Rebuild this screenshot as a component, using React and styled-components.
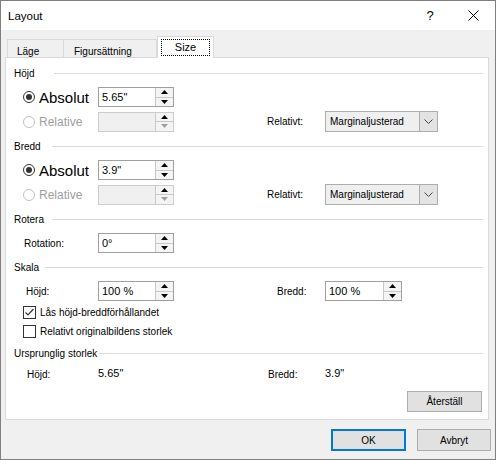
import React from 'react'
import styled, { createGlobalStyle } from 'styled-components'

const GlobalStyle = createGlobalStyle`
  html, body { margin: 0; padding: 0; background: #fff; }
  body { font-family: "Liberation Sans", Arial, sans-serif; color: #000; }
`

const Window = styled.div`
  width: 496px;
  height: 460px;
  box-sizing: border-box;
  border: 1px solid #7f7f7f;
  background: #f0f0f0;
  display: flex;
  flex-direction: column;
`

const TitleBar = styled.div`
  height: 29px;
  background: #fff;
  display: flex;
  align-items: center;
  padding-left: 7px;
  flex-shrink: 0;
`

const Title = styled.div`
  flex: 1;
  font-size: 11.5px;
`

const CaptionButton = styled.div`
  width: ${p => p.$w}px;
  height: 29px;
  display: flex;
  align-items: center;
  justify-content: center;
  font-size: 13px;
`

const TabStrip = styled.div`
  display: flex;
  align-items: flex-end;
  height: 21px;
  margin-top: 7px;
  padding-left: 6px;
  margin-bottom: -1px;
  position: relative;
  z-index: 1;
`

const Tab = styled.div`
  width: ${p => p.$w}px;
  height: ${p => p.$active ? 22 : 19}px;
  box-sizing: border-box;
  border: 1px solid #d9d9d9;
  border-left-width: ${p => p.$first || p.$active ? 1 : 0}px;
  border-bottom: ${p => p.$active ? 'none' : '1px solid #d9d9d9'};
  background: ${p => p.$active ? '#fff' : '#f0f0f0'};
  display: flex;
  align-items: center;
  justify-content: ${p => p.$active ? 'center' : 'flex-start'};
  padding-left: ${p => p.$active ? 0 : p.$pl}px;
  padding-top: ${p => p.$active ? 0 : 5}px;
  font-size: ${p => p.$active ? 11 : 10}px;
`

const FocusRing = styled.span`
  outline: 1px dotted #000;
  padding: 1px 13px 2px;
  margin-top: -1px;
`

const Panel = styled.div`
  margin-left: 4px;
  width: 484px;
  box-sizing: border-box;
  border: 1px solid #d9d9d9;
  background: #fff;
  padding: 8px 0 7px;
  display: flex;
  flex-direction: column;
`

const GroupHeader = styled.div`
  height: 14px;
  display: flex;
  align-items: center;
  padding: 0 5px 0 8px;
  margin-top: ${p => p.$mt || 0}px;
  font-size: 10px;
`

const GroupLabel = styled.div`
  width: ${p => p.$w ? `${p.$w}px` : 'auto'};
  margin-right: ${p => p.$w ? 0 : 2}px;
  white-space: nowrap;
  flex-shrink: 0;
`

const GroupLine = styled.div`
  flex: 1;
  height: 1px;
  background: #dcdcdc;
`

const Row = styled.div`
  display: flex;
  align-items: center;
  height: ${p => p.$h || 20}px;
  margin-top: ${p => p.$mt || 0}px;
`

const Cell = styled.div`
  width: ${p => p.$w}px;
  padding-left: ${p => p.$pl || 0}px;
  box-sizing: border-box;
  display: flex;
  align-items: center;
  flex-shrink: 0;
  font-size: 10px;
`

const RadioCircle = styled.span`
  width: 12px;
  height: 12px;
  box-sizing: border-box;
  border-radius: 50%;
  border: 1px solid ${p => p.$disabled ? '#c2c2c2' : '#333'};
  background: #fff;
  display: flex;
  align-items: center;
  justify-content: center;
  margin-right: 4px;
  flex-shrink: 0;
  &::after {
    content: '';
    display: ${p => p.$checked ? 'block' : 'none'};
    width: 6px;
    height: 6px;
    border-radius: 50%;
    background: #333;
  }
`

const RadioText = styled.span`
  font-size: ${p => p.$big ? 15 : 12}px;
  color: ${p => p.$disabled ? '#a0a0a0' : '#000'};
  white-space: nowrap;
`

const Radio = ({ label, checked, disabled, big }) =>
  <>
    <RadioCircle $checked={checked} $disabled={disabled} />
    <RadioText $big={big} $disabled={disabled}>{label}</RadioText>
  </>

const SpinBox = styled.div`
  width: ${p => p.$w}px;
  height: 20px;
  box-sizing: border-box;
  border: 1px solid ${p => p.$disabled ? '#cccccc' : '#a0a0a0'};
  background: ${p => p.$disabled ? '#f0f0f0' : '#fff'};
  display: flex;
  flex-shrink: 0;
`

const SpinValue = styled.div`
  flex: 1;
  display: flex;
  align-items: center;
  padding-left: 3px;
  font-size: 11px;
`

const SpinButtons = styled.div`
  width: 17px;
  display: flex;
  flex-direction: column;
  border-left: 1px solid #c8c8c8;
  background: #f4f4f4;
`

const SpinButton = styled.div`
  flex: 1;
  display: flex;
  align-items: center;
  justify-content: center;
  & + & { border-top: 1px solid #c8c8c8; }
`

const Arrow = ({ down, color = '#000' }) =>
  <svg width='7' height='4' viewBox='0 0 7 4'>
    <polygon points={down ? '0,0 7,0 3.5,4' : '0,4 7,4 3.5,0'} fill={color} />
  </svg>

const Spinner = ({ value, w = 76, disabled }) =>
  <SpinBox $w={w} $disabled={disabled}>
    <SpinValue>{value}</SpinValue>
    <SpinButtons>
      <SpinButton><Arrow /></SpinButton>
      <SpinButton><Arrow down color={disabled ? '#a0a0a0' : '#000'} /></SpinButton>
    </SpinButtons>
  </SpinBox>

const Select = styled.div`
  width: 113px;
  height: 21px;
  box-sizing: border-box;
  border: 1px solid #adadad;
  background: #efefef;
  display: flex;
  font-size: 10px;
`

const SelectValue = styled.div`
  flex: 1;
  display: flex;
  align-items: center;
  padding-left: 4px;
`

const SelectArrow = styled.div`
  width: 17px;
  border-left: 1px solid #adadad;
  background: #e3e3e3;
  display: flex;
  align-items: center;
  justify-content: center;
`

const Dropdown = ({ value }) =>
  <Select>
    <SelectValue>{value}</SelectValue>
    <SelectArrow>
      <svg width='9' height='5' viewBox='0 0 9 5'>
        <polyline points='0.5,0.5 4.5,4.5 8.5,0.5' fill='none' stroke='#444' strokeWidth='1' />
      </svg>
    </SelectArrow>
  </Select>

const CheckBox = styled.span`
  width: 13px;
  height: 13px;
  box-sizing: border-box;
  border: 1px solid #333;
  background: #fff;
  margin-right: 4px;
  display: flex;
  align-items: center;
  justify-content: center;
  flex-shrink: 0;
`

const Check = ({ label, checked }) =>
  <>
    <CheckBox>
      {checked &&
        <svg width='11' height='11' viewBox='0 0 11 11'>
          <polyline points='1.5,5.5 4,8 9.5,2' fill='none' stroke='#333' strokeWidth='1.2' />
        </svg>}
    </CheckBox>
    <span>{label}</span>
  </>

const Value = styled.span`
  font-size: 11px;
  margin-top: -3px;
`

const ButtonRow = styled.div`
  display: flex;
  justify-content: ${p => p.$end ? 'flex-end' : 'flex-start'};
  margin-top: ${p => p.$mt || 0}px;
  padding-right: ${p => p.$pr || 0}px;
  gap: 11px;
`

const Button = styled.div`
  width: ${p => p.$w || 74}px;
  height: ${p => p.$h || 21}px;
  box-sizing: border-box;
  border: ${p => p.$default ? '2px solid #0078d7' : '1px solid #adadad'};
  background: #e1e1e1;
  display: flex;
  align-items: center;
  justify-content: center;
  font-size: 10px;
`

export default function App() {
  return (
    <>
      <GlobalStyle />
      <Window>
        <TitleBar>
          <Title>Layout</Title>
          <CaptionButton $w={42}>?</CaptionButton>
          <CaptionButton $w={44}>
            <svg width='11' height='11' viewBox='0 0 11 11'>
              <path d='M0.5 0.5 L10.5 10.5 M10.5 0.5 L0.5 10.5' stroke='#000' strokeWidth='1' />
            </svg>
          </CaptionButton>
        </TitleBar>

        <TabStrip>
          <Tab $w={57} $pl={9} $first>Läge</Tab>
          <Tab $w={93} $pl={10}>Figursättning</Tab>
          <Tab $w={57} $active><FocusRing>Size</FocusRing></Tab>
        </TabStrip>

        <Panel>
          <GroupHeader>
            <GroupLabel $w={40}>Höjd</GroupLabel>
            <GroupLine />
          </GroupHeader>
          <Row $mt={7}>
            <Cell $w={92} $pl={17}><Radio label='Absolut' checked big /></Cell>
            <Spinner value='5.65"' />
          </Row>
          <Row $mt={4} $h={21}>
            <Cell $w={92} $pl={17}><Radio label='Relative' disabled /></Cell>
            <Spinner disabled />
            <Cell $w={151} $pl={93}>Relativt:</Cell>
            <Dropdown value='Marginaljusterad' />
          </Row>

          <GroupHeader $mt={7}>
            <GroupLabel $w={38}>Bredd</GroupLabel>
            <GroupLine />
          </GroupHeader>
          <Row $mt={7}>
            <Cell $w={92} $pl={17}><Radio label='Absolut' checked big /></Cell>
            <Spinner value='3.9"' />
          </Row>
          <Row $mt={4} $h={21}>
            <Cell $w={92} $pl={17}><Radio label='Relative' disabled /></Cell>
            <Spinner disabled />
            <Cell $w={151} $pl={93}>Relativt:</Cell>
            <Dropdown value='Marginaljusterad' />
          </Row>

          <GroupHeader $mt={7}>
            <GroupLabel $w={38}>Rotera</GroupLabel>
            <GroupLine />
          </GroupHeader>
          <Row $mt={7}>
            <Cell $w={92} $pl={18}>Rotation:</Cell>
            <Spinner value='0°' />
          </Row>

          <GroupHeader $mt={7}>
            <GroupLabel $w={31}>Skala</GroupLabel>
            <GroupLine />
          </GroupHeader>
          <Row $mt={7}>
            <Cell $w={92} $pl={20}>Höjd:</Cell>
            <Spinner value='100 %' />
            <Cell $w={151} $pl={103}>Bredd:</Cell>
            <Spinner value='100 %' w={77} />
          </Row>
          <Row $mt={3} $h={16}>
            <Cell $w={400} $pl={17}><Check label='Lås höjd-breddförhållandet' checked /></Cell>
          </Row>
          <Row $mt={3} $h={16}>
            <Cell $w={400} $pl={17}><Check label='Relativt originalbildens storlek' /></Cell>
          </Row>

          <GroupHeader $mt={7}>
            <GroupLabel>Ursprunglig storlek</GroupLabel>
            <GroupLine />
          </GroupHeader>
          <Row $mt={5} $h={18}>
            <Cell $w={92} $pl={21}>Höjd:</Cell>
            <Cell $w={76}><Value>5.65"</Value></Cell>
            <Cell $w={151} $pl={94}>Bredd:</Cell>
            <Cell $w={76}><Value>3.9"</Value></Cell>
          </Row>
          <ButtonRow $end $mt={8} $pr={6}>
            <Button $w={75}>Återställ</Button>
          </ButtonRow>
        </Panel>

        <ButtonRow $end $mt={9} $pr={4}>
          <Button $w={75} $h={22} $default>OK</Button>
          <Button $w={74} $h={22}>Avbryt</Button>
        </ButtonRow>
      </Window>
    </>
  )
}
